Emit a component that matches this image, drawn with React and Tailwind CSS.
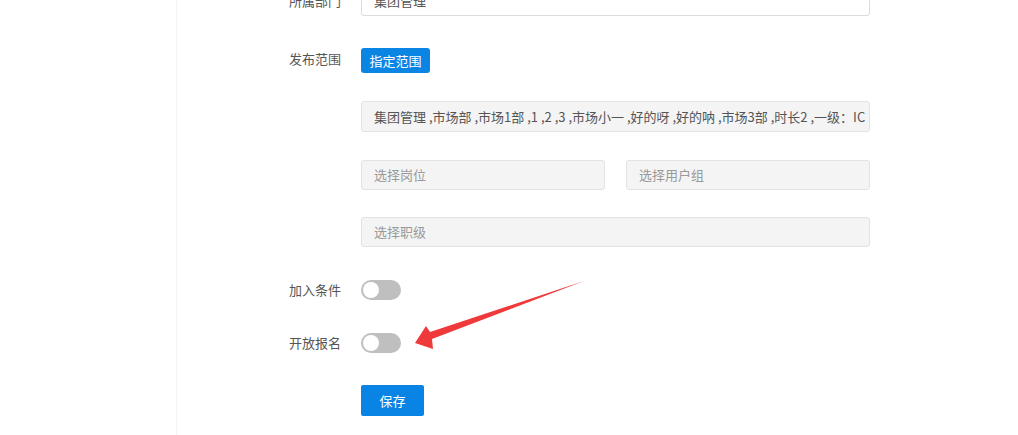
export default function App() {
  const font = { fontFamily: '"Microsoft YaHei", "Noto Sans CJK SC", "Liberation Sans", sans-serif' };
  const inputCls = "rounded-[3px] border border-[#e3e3e3] bg-[#f4f4f4] pl-[12px] flex items-center text-[13px]";
  const Toggle = () => (
    <div className="w-[40px] h-[20px] rounded-full bg-[#bfbfbf] flex items-center pl-[2px]">
      <div className="w-[16px] h-[16px] rounded-full bg-white" />
    </div>
  );
  return (
    <div className="relative w-[1018px] h-[435px] overflow-hidden bg-white flex" style={font}>
      <div className="w-[177px] shrink-0 border-r border-[#f3f3f3]" />
      <div className="flex-1 pl-[112px] flex flex-col">
        <div className="-mt-[15px] flex items-center h-[31px]">
          <div className="w-[72px] text-[13px] text-[#555]">所属部门</div>
          <div className="w-[509px] h-[31px] rounded-[3px] border border-[#dcdcdc] bg-white pl-[12px] flex items-center text-[13px] text-[#555]">集团管理</div>
        </div>
        <div className="mt-[32px] flex items-center h-[25px]">
          <div className="w-[72px] text-[13px] text-[#555] -mt-[3px]">发布范围</div>
          <div className="h-[25px] w-[69px] rounded-[3px] bg-[#0b85e4] text-white text-[13px] flex items-center justify-center">指定范围</div>
        </div>
        <div className="mt-[28px] flex">
          <div className="w-[72px]" />
          <div className={inputCls + " h-[31px] w-[509px] text-[#555]"}>集团管理 ,市场部 ,市场1部 ,1 ,2 ,3 ,市场小一 ,好的呀 ,好的呐 ,市场3部 ,时长2 ,一级：IC</div>
        </div>
        <div className="mt-[28px] flex">
          <div className="w-[72px]" />
          <div className="w-[509px] flex gap-[21px]">
            <div className={inputCls + " flex-1 h-[30px] text-[#999]"}>选择岗位</div>
            <div className={inputCls + " flex-1 h-[30px] text-[#999]"}>选择用户组</div>
          </div>
        </div>
        <div className="mt-[27px] flex">
          <div className="w-[72px]" />
          <div className={inputCls + " h-[30px] w-[509px] text-[#999]"}>选择职级</div>
        </div>
        <div className="mt-[33px] flex items-center h-[20px]">
          <div className="w-[72px] text-[13px] text-[#555]">加入条件</div>
          <Toggle />
        </div>
        <div className="mt-[33px] flex items-center h-[20px]">
          <div className="w-[72px] text-[13px] text-[#555]">开放报名</div>
          <Toggle />
        </div>
        <div className="mt-[32px] flex">
          <div className="w-[72px]" />
          <div className="h-[31px] w-[63px] rounded-[2px] bg-[#0a84e4] text-white text-[13px] flex items-center justify-center">保存</div>
        </div>
      </div>
      <svg className="absolute left-0 top-0 pointer-events-none" width="1018" height="435">
        <polygon points="584,281 430,332 426,326 415,343 433,349 432,339" fill="#f0393a" />
      </svg>
    </div>
  );
}
